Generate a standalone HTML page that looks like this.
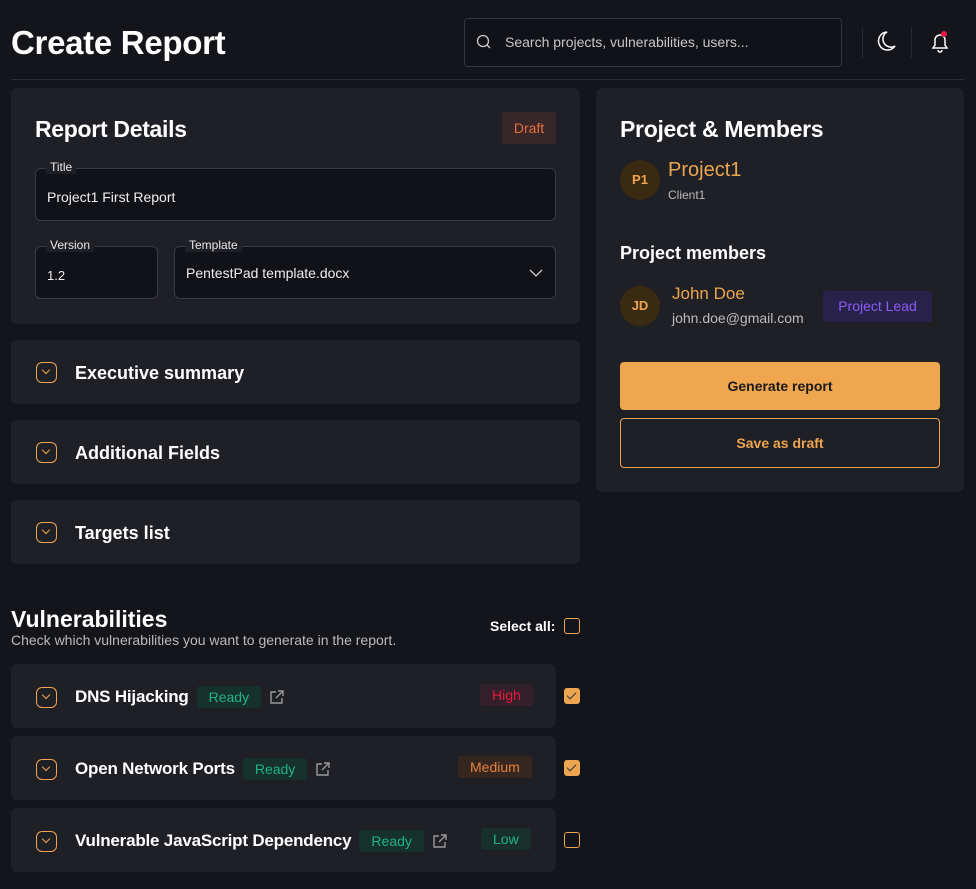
<!DOCTYPE html>
<html><head><style>
*{box-sizing:border-box;margin:0;padding:0}
body{width:976px;height:889px;background:#14151b;font-family:"Liberation Sans",sans-serif;color:#fff;position:relative;overflow:hidden}
.a{position:absolute}
.card{position:absolute;background:#1f2026;border-radius:6px}
h1{position:absolute;left:11px;top:24px;font-size:33px;font-weight:bold;letter-spacing:-0.3px}
.field{position:absolute;border:1px solid #3a3b42;border-radius:6px;background:#111217}
.lab{position:absolute;top:-9px;left:10px;background:#1f2026;padding:0 4px;font-size:12px;color:#e8e8e8;line-height:14px}
.val{position:absolute;left:11px;font-size:14px;color:#eee}
.chev{position:absolute;width:21px;height:21px;border:1.5px solid #eea54f;border-radius:6px}
.chev:after{content:"";position:absolute;left:6px;top:4px;width:5px;height:5px;border-right:1.5px solid #eea54f;border-bottom:1.5px solid #eea54f;transform:rotate(45deg)}
.acc{font-size:18px;font-weight:bold}
.row{position:absolute;left:64px;top:18px;height:30px;display:flex;align-items:center;gap:8px}
.row b{font-size:17px;letter-spacing:-0.2px}
.tag{font-size:14px;padding:3px 12px;border-radius:3px}
.ready{background:#16302b;color:#1fb38a}
.sev{position:absolute;top:20px;font-size:14px;padding:3px 12px;border-radius:3px}
.cb{position:absolute;width:16px;height:16px;border:1.5px solid #eea54f;border-radius:3px}
.cb.on{background:#eea54f}
.cb.on:after{content:"";position:absolute;left:4px;top:1px;width:4px;height:8px;border-right:1.5px solid #333;border-bottom:1.5px solid #333;transform:rotate(45deg)}
</style></head><body>
<h1>Create Report</h1>
<div class="a" style="left:464px;top:18px;width:378px;height:49px;border:1px solid #34353c;border-radius:4px;background:#111217"></div>
<svg class="a" style="left:476px;top:34px" width="16" height="16" viewBox="0 0 16 16"><circle cx="7" cy="7" r="5.5" fill="none" stroke="#ccc" stroke-width="1.3"/><path d="M11 11l3 3" stroke="#ccc" stroke-width="1.3"/></svg>
<div class="a" style="left:505px;top:34px;font-size:14px;color:#c8c8c8">Search projects, vulnerabilities, users...</div>
<div class="a" style="left:862px;top:28px;width:1px;height:30px;background:#2a2b31"></div>
<div class="a" style="left:911px;top:28px;width:1px;height:30px;background:#2a2b31"></div>
<svg class="a" style="left:875px;top:30px" width="22" height="24" viewBox="0 0 22 24"><path d="M12 2A9 9 0 1 0 20 16 7 7 0 0 1 12 2z" fill="none" stroke="#fff" stroke-width="1.5"/></svg>
<svg class="a" style="left:929px;top:30px" width="22" height="24" viewBox="0 0 22 24"><path d="M4 18h14l-2-3V10a5 5 0 0 0-10 0v5z M9 20a2 2 0 0 0 4 0" fill="none" stroke="#fff" stroke-width="1.5"/><circle cx="15" cy="4" r="3" fill="#e8193f"/></svg>
<div class="a" style="left:11px;top:79px;width:953px;height:1px;background:#2c2d33"></div>

<div class="card" style="left:11px;top:88px;width:569px;height:236px">
 <div class="a" style="left:24px;top:28px;font-size:23px;font-weight:bold;letter-spacing:-0.3px">Report Details</div>
 <div class="a" style="left:491px;top:24px;width:54px;height:32px;background:#37272a;border-radius:3px;color:#e86f3a;font-size:14px;text-align:center;line-height:32px">Draft</div>
 <div class="field" style="left:24px;top:80px;width:521px;height:53px"><div class="lab">Title</div><div class="val" style="top:20px">Project1 First Report</div></div>
 <div class="field" style="left:24px;top:158px;width:123px;height:53px"><div class="lab">Version</div><div class="val" style="top:21px;font-size:13px">1.2</div></div>
 <div class="field" style="left:163px;top:158px;width:382px;height:53px"><div class="lab">Template</div><div class="val" style="top:18px">PentestPad template.docx</div>
 <svg class="a" style="right:12px;top:21px" width="14" height="10"><path d="M1 2l6 6 6-6" fill="none" stroke="#ccc" stroke-width="1.3"/></svg></div>
</div>

<div class="card" style="left:11px;top:340px;width:569px;height:64px"><div class="chev" style="left:25px;top:22px"></div><div class="a acc" style="left:64px;top:23px">Executive summary</div></div>
<div class="card" style="left:11px;top:420px;width:569px;height:64px"><div class="chev" style="left:25px;top:22px"></div><div class="a acc" style="left:64px;top:23px">Additional Fields</div></div>
<div class="card" style="left:11px;top:500px;width:569px;height:64px"><div class="chev" style="left:25px;top:22px"></div><div class="a acc" style="left:64px;top:23px">Targets list</div></div>

<div class="a" style="left:11px;top:606px;font-size:23px;font-weight:bold">Vulnerabilities</div>
<div class="a" style="left:11px;top:632px;font-size:14px;color:#bbb">Check which vulnerabilities you want to generate in the report.</div>
<div class="a" style="left:490px;top:618px;font-size:14px;font-weight:bold">Select all:</div>
<div class="cb" style="left:564px;top:618px"></div>

<div class="card" style="left:11px;top:664px;width:545px;height:64px"><div class="chev" style="left:25px;top:23px"></div>
<div class="row"><b>DNS Hijacking</b><span class="tag ready">Ready</span>
<svg width="16" height="16" viewBox="0 0 16 16"><path d="M7 3H2v11h11V9M9 2h5v5M14 2L7 9" fill="none" stroke="#999" stroke-width="1.4"/></svg></div>
<div class="sev" style="left:469px;background:#33202a;color:#e8193f">High</div></div>
<div class="cb on" style="left:564px;top:688px"></div>

<div class="card" style="left:11px;top:736px;width:545px;height:64px"><div class="chev" style="left:25px;top:23px"></div>
<div class="row"><b>Open Network Ports</b><span class="tag ready">Ready</span>
<svg width="16" height="16" viewBox="0 0 16 16"><path d="M7 3H2v11h11V9M9 2h5v5M14 2L7 9" fill="none" stroke="#999" stroke-width="1.4"/></svg></div>
<div class="sev" style="left:447px;background:#352720;color:#e8803c">Medium</div></div>
<div class="cb on" style="left:564px;top:760px"></div>

<div class="card" style="left:11px;top:808px;width:545px;height:64px"><div class="chev" style="left:25px;top:23px"></div>
<div class="row"><b>Vulnerable JavaScript Dependency</b><span class="tag ready">Ready</span>
<svg width="16" height="16" viewBox="0 0 16 16"><path d="M7 3H2v11h11V9M9 2h5v5M14 2L7 9" fill="none" stroke="#999" stroke-width="1.4"/></svg></div>
<div class="sev" style="left:470px;background:#17302c;color:#1fb38a">Low</div></div>
<div class="cb" style="left:564px;top:832px"></div>

<div class="card" style="left:596px;top:88px;width:368px;height:404px">
 <div class="a" style="left:24px;top:28px;font-size:23px;font-weight:bold;letter-spacing:-0.3px">Project &amp; Members</div>
 <div class="a" style="left:24px;top:72px;width:40px;height:40px;border-radius:50%;background:#3a2a12;color:#eea54f;font-size:13px;font-weight:bold;text-align:center;line-height:40px">P1</div>
 <div class="a" style="left:72px;top:71px;font-size:20px;color:#eea54f">Project1</div>
 <div class="a" style="left:72px;top:100px;font-size:12px;color:#bbb">Client1</div>
 <div class="a" style="left:24px;top:155px;font-size:18px;font-weight:bold">Project members</div>
 <div class="a" style="left:24px;top:198px;width:40px;height:40px;border-radius:50%;background:#3a2a12;color:#eea54f;font-size:13px;font-weight:bold;text-align:center;line-height:40px">JD</div>
 <div class="a" style="left:76px;top:196px;font-size:17px;color:#eea54f">John Doe</div>
 <div class="a" style="left:76px;top:222px;font-size:14px;color:#bbb">john.doe@gmail.com</div>
 <div class="a" style="left:227px;top:203px;width:109px;height:31px;background:#28224a;border-radius:3px;color:#8b5cf6;font-size:14px;text-align:center;line-height:31px">Project Lead</div>
 <div class="a" style="left:24px;top:274px;width:320px;height:48px;background:#f0a54f;border-radius:4px;color:#1a1a1a;font-size:14px;font-weight:bold;text-align:center;line-height:48px">Generate report</div>
 <div class="a" style="left:24px;top:330px;width:320px;height:50px;border:1px solid #eea54f;border-radius:4px;color:#eea54f;font-size:14px;font-weight:bold;text-align:center;line-height:48px">Save as draft</div>
</div>
</body></html>
